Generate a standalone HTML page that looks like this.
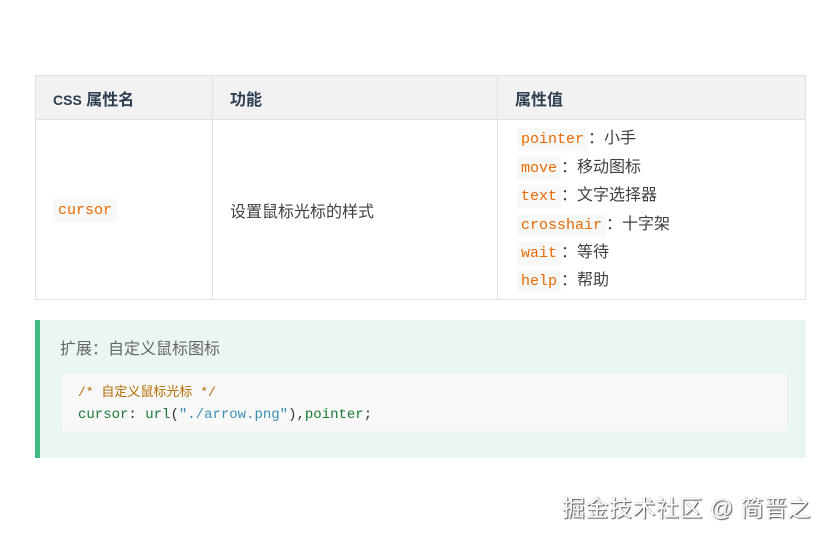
<!DOCTYPE html>
<html><head><meta charset="utf-8"><style>
body{margin:0;width:840px;height:538px;background:#fff;position:relative;font-family:"Liberation Sans","Noto Sans CJK SC",sans-serif;color:#333;overflow:hidden}
table{position:absolute;left:35px;top:75px;width:771px;border-collapse:collapse;font-size:16px;table-layout:fixed}
th,td{border:1px solid #dfe2e5;text-align:left;padding:0 17px}
th{background:#f2f2f2;height:43px;font-weight:bold;color:#2c3e50}
td{height:177px;color:#404040}
code{font-family:"Liberation Mono","DejaVu Sans Mono",monospace;color:#e96900;background:#f8f8f8;padding:3px 5px;border-radius:2px;font-size:15px}
.vals div{line-height:27.4px}
.vals code{padding:3px 4px}
.tip{position:absolute;left:35px;top:320px;width:771px;height:138px;background:#eaf7f0;border-left:5px solid #42b983;box-sizing:border-box}
.tip .t{position:absolute;left:20px;top:15px;font-size:16px;color:#666}
.pre{position:absolute;left:22px;top:54px;width:725px;height:57px;background:#f8f8f8;font-family:"Liberation Mono","DejaVu Sans Mono",monospace;font-size:14px;box-sizing:border-box;padding:8px 16px;line-height:22px}
.wm{position:absolute;left:562px;top:489px;font-size:23px;color:#fff;text-shadow:1px 1px 1px #555,0 0 1px #888;letter-spacing:0.5px}
</style></head><body>
<table>
<tr><th style="width:142px"><span style="font-size:14px">CSS</span> 属性名</th><th style="width:250px">功能</th><th>属性值</th></tr>
<tr><td><code>cursor</code></td><td>设置鼠标光标的样式</td>
<td class="vals" style="padding-left:19px;padding-top:2px"><div><code>pointer</code>：小手</div><div><code>move</code>：移动图标</div><div><code>text</code>：文字选择器</div><div><code>crosshair</code>：十字架</div><div><code>wait</code>：等待</div><div><code>help</code>：帮助</div></td></tr>
</table>
<div class="tip"><div class="t">扩展：自定义鼠标图标</div>
<div class="pre"><div style="color:#b36d00;font-size:13px">/* 自定义鼠标光标 */</div><div><span style="color:#1a7a33">cursor</span>: <span style="color:#1a7a33">url</span>(<span style="color:#3a8fb7">"./arrow.png"</span>),<span style="color:#1a7a33">pointer</span>;</div></div>
</div>
<div class="wm">掘金技术社区 @ 简晋之</div>
</body></html>
